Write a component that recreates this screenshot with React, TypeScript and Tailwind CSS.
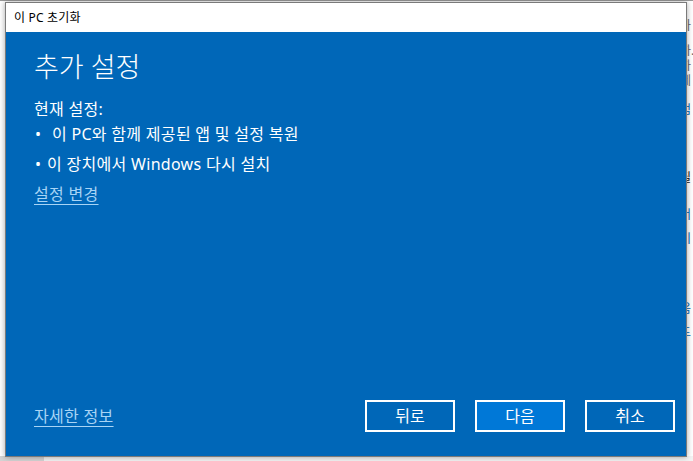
import React from "react";

const font = {
  fontFamily: '"Noto Sans", "Noto Sans CJK KR", sans-serif',
};

export default function App() {
  return (
    <div
      className="relative w-[693px] h-[461px] overflow-hidden bg-[#f3f3f3]"
      style={font}
    >
      {/* background settings window */}
      <div className="absolute left-0 top-0 w-[693px] h-[456px] bg-white border-t border-[#9a9a9a]">
        <div className="absolute left-[680px] top-[18px] flex flex-col text-[12px] leading-[13px]">
          <div className="text-[#666] h-[24px]">가</div>
          <div className="text-[#666] h-[60px] leading-[15px]">
            하.
            <br />
            하
            <br />
            제
          </div>
          <div className="text-[#0067b8] h-[68px]">컴</div>
          <div className="text-[#111] h-[37px]">필</div>
          <div className="text-[#0067b8] h-[24px]">버</div>
          <div className="text-[#0067b8] h-[70px]">미</div>
          <div className="text-[#0067b8] h-[24px]">음</div>
          <div className="text-[#0067b8]">드</div>
        </div>
      </div>
      <div className="absolute left-0 top-[456px] w-[44px] h-[5px] bg-[#d4d4d4]" />

      {/* dialog */}
      <div className="absolute left-[5px] top-[2px] w-[682px] h-[455px] flex flex-col border border-[#7a7a7a] shadow-[0_0_6px_rgba(0,0,0,0.35)]">
        <div className="h-[29px] bg-white flex items-center pl-[8px] text-[12px] tracking-[0.2px] text-black">
          이 PC 초기화
        </div>
        <div className="flex-1 bg-[#0067b8] flex flex-col text-white pl-[28px] pr-[11px]">
          <div className="pt-[17px] text-[27px] leading-[36px] font-light">
            추가 설정
          </div>
          <div className="mt-[14px] text-[16px] tracking-[0.3px] leading-[20px]">
            현재 설정:
          </div>
          <div className="text-[16px] tracking-[0.3px] leading-[30px] flex">
            <span className="pl-[1px] w-[18px]">•</span>
            <span>이 PC와 함께 제공된 앱 및 설정 복원</span>
          </div>
          <div className="text-[16px] tracking-[0.3px] leading-[30px] flex">
            <span className="pl-[1px] w-[13px]">•</span>
            <span>이 장치에서 Windows 다시 설치</span>
          </div>
          <div className="text-[16px] tracking-[0.3px] leading-[30px]">
            <span className="text-[#a8d4f5] underline underline-offset-[4px] decoration-[1px]">
              설정 변경
            </span>
          </div>
          <div className="flex-1" />
          <div className="flex items-center pb-[24px]">
            <span className="text-[16px] tracking-[0.3px] text-[#a8d4f5] underline underline-offset-[4px] decoration-[1px]">
              자세한 정보
            </span>
            <div className="flex-1" />
            <div className="flex gap-[20px]">
              <button className="w-[90px] h-[32px] border-2 border-white text-[16px] text-white flex items-center justify-center">
                뒤로
              </button>
              <button className="w-[90px] h-[32px] border-2 border-white bg-[#0078d7] text-[16px] text-white flex items-center justify-center">
                다음
              </button>
              <button className="w-[90px] h-[32px] border-2 border-white text-[16px] text-white flex items-center justify-center">
                취소
              </button>
            </div>
          </div>
        </div>
      </div>
    </div>
  );
}
